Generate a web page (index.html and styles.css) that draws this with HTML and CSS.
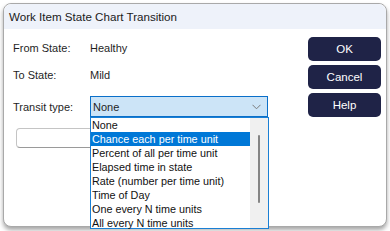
FILE: index.html
```html
<!DOCTYPE html>
<html lang="en">
<head>
<meta charset="UTF-8" />
<title>Work Item State Chart Transition</title>
<link rel="stylesheet" href="styles.css">
</head>
<body>

<div class="window">
  <div class="titlebar">Work Item State Chart Transition</div>
  <div class="window-body">
    <div class="form">
      <div class="row row-from">
        <span class="label">From State:</span>
        <span class="value">Healthy</span>
      </div>
      <div class="row row-to">
        <span class="label">To State:</span>
        <span class="value">Mild</span>
      </div>
      <div class="row row-type">
        <span class="label">Transit type:</span>
        <div class="combo">
          <span class="combo-text">None</span>
          <svg class="chevron" width="9" height="6" viewBox="0 0 9 6"><path d="M0.5 0.8 L4.5 4.8 L8.5 0.8" fill="none" stroke="#7a7a7a" stroke-width="1"/></svg>
          <!-- dropdown popup -->
          <div class="dropdown">
            <ul class="options">
              <li>None</li>
              <li class="selected">Chance each per time unit</li>
              <li>Percent of all per time unit</li>
              <li>Elapsed time in state</li>
              <li>Rate (number per time unit)</li>
              <li>Time of Day</li>
              <li>One every N time units</li>
              <li>All every N time units</li>
            </ul>
            <div class="scrollbar"><div class="thumb"></div></div>
          </div>
        </div>
      </div>
      <div class="textbox"></div>
    </div>
    <div class="buttons">
      <button class="btn">OK</button>
      <button class="btn">Cancel</button>
      <button class="btn">Help</button>
    </div>
  </div>
</div>

</body>
</html>
```

FILE: styles.css
```css
body {
  margin: 0;
  padding: 3px 0 0 3px;
  background: #ffffff;
  font-family: "Liberation Sans", Arial, sans-serif;
  color: #1f1f1f;
  height: 231px;
  overflow: hidden;
}
.window {
  width: 382px;
  height: 222px;
  border: 1px solid #a9a9a9;
  border-radius: 8px;
  background: #ffffff;
  box-shadow: 0 3px 4px rgba(0, 0, 0, 0.35);
  position: relative;
}
.titlebar {
  height: 25px;
  line-height: 25px;
  padding-left: 5px;
  background: #eef2fa;
  border-radius: 8px 8px 0 0;
  font-size: 11.6px;
  color: #1a1a1a;
}
.window-body {
  display: flex;
  justify-content: space-between;
}
/* left column */
.form {
  padding-left: 9px;
  padding-top: 9px;
  width: 270px;
}
.row {
  display: flex;
  align-items: center;
  font-size: 11px;
}
.row-from { height: 20px; }
.row-to { height: 20px; margin-top: 7px; }
.row-type { height: 21px; margin-top: 11px; }
.label {
  width: 77px;
  flex-shrink: 0;
}
.combo {
  position: relative;
  width: 168px;
  height: 19px;
  border: 1px solid #0a6fc9;
  background: #cce4f7;
  display: flex;
  align-items: center;
  justify-content: space-between;
  padding: 0 6px 0 2px;
}
.combo-text { font-size: 11px; }
.chevron { margin-top: 1px; }
.dropdown {
  position: absolute;
  left: -1px;
  top: 20px;
  width: 177px;
  height: 110px;
  border: 1px solid #1a7fd4;
  background: #ffffff;
  display: flex;
  z-index: 5;
}
.options {
  list-style: none;
  margin: 0;
  padding: 0;
  flex: 1;
}
.options li {
  height: 14px;
  line-height: 14px;
  padding-left: 1px;
  font-size: 10.8px;
  color: #111;
  white-space: nowrap;
}
.options li.selected {
  background: #0078d7;
  color: #ffffff;
}
.scrollbar {
  width: 18px;
  background: #f0f0f0;
  position: relative;
}
.thumb {
  position: absolute;
  left: 8px;
  top: 17px;
  width: 2px;
  height: 68px;
  border-radius: 1px;
  background: #858585;
}
.textbox {
  width: 200px;
  height: 18px;
  margin-top: 11px;
  margin-left: 3px;
  border: 1px solid #c4c4c4;
  border-bottom-color: #9a9a9a;
  border-radius: 4px;
}
/* right column */
.buttons {
  display: flex;
  flex-direction: column;
  gap: 4px;
  padding: 8px 5px 0 0;
}
.btn {
  width: 73px;
  height: 24px;
  background: #1f2347;
  color: #ffffff;
  border: none;
  border-radius: 5px;
  font-family: "Liberation Sans", Arial, sans-serif;
  font-size: 11.5px;
  padding: 0;
}
```
